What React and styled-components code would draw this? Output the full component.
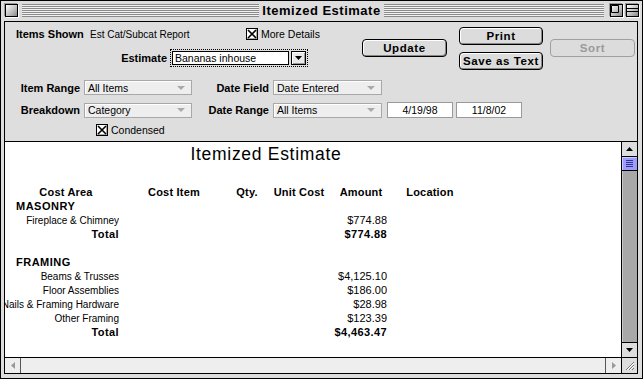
import React from 'react';
import styled, { createGlobalStyle } from 'styled-components';

const GlobalStyle = createGlobalStyle`
  body {
    margin: 0;
    background: #fff;
    font-family: "Liberation Sans", Arial, sans-serif;
  }
`;

const Window = styled.div`
  width: 643px;
  height: 379px;
  box-sizing: border-box;
  border: 1px solid #000;
  background: #dddddd;
  display: flex;
  flex-direction: column;
  overflow: hidden;
`;

const TitleBar = styled.div`
  height: 19px;
  display: grid;
  grid-template-columns: 1fr auto 1fr;
  align-items: center;
  padding: 0 3px;
`;

const TitleSide = styled.div`
  display: flex;
  align-items: center;
  gap: ${({ right }) => (right ? 3 : 4)}px;
`;

const BoxIcon = styled.div`
  width: 11px;
  height: 11px;
  border: 1px solid #000;
  background: linear-gradient(135deg, #fff 0%, #bbb 60%, #888 100%);
  box-shadow: 1px 1px 0 #fff, -1px -1px 0 #999;
  flex: none;
  position: relative;
  margin-left: ${({ ml }) => ml || 0}px;
  svg {
    position: absolute;
    inset: 0;
  }
`;

const Stripes = styled.div`
  flex: 1;
  height: 13px;
  background: repeating-linear-gradient(to bottom, #8a8a8a 0 1px, #f2f2f2 1px 2px);
`;

const WindowTitle = styled.div`
  font-weight: bold;
  font-size: 13px;
  padding: 0 3px;
  letter-spacing: 0.5px;
`;

const Frame = styled.div`
  flex: 1;
  display: flex;
  flex-direction: column;
  margin: 1px 4px 4px 3px;
  border: 1px solid #000;
  min-height: 0;
`;

const Panel = styled.div`
  height: 114px;
  padding-top: 5px;
  background: #dedede;
  border-bottom: 1px solid #000;
  flex: none;
  font-size: 10.5px;
`;

const TopSection = styled.div`
  display: flex;
  height: 44px;
`;

const LeftTop = styled.div`
  width: 357px;
  display: flex;
  flex-direction: column;
`;

const Row = styled.div`
  display: flex;
  align-items: center;
  height: ${({ h }) => h || 15}px;
  margin-top: ${({ mt }) => mt || 0}px;
  padding-left: ${({ pl }) => pl || 0}px;
`;

const Label = styled.div`
  font-weight: bold;
  font-size: 11px;
  width: ${({ w }) => (w ? `${w}px` : 'auto')};
  text-align: ${({ right }) => (right ? 'right' : 'left')};
  padding-right: ${({ right }) => (right ? 4 : 0)}px;
  box-sizing: border-box;
  flex: none;
  white-space: nowrap;
`;

const Value = styled.div`
  width: ${({ w }) => w}px;
  font-size: 10px;
  flex: none;
  white-space: nowrap;
`;

const CheckWrap = styled.div`
  display: flex;
  align-items: center;
  gap: 3px;
`;

const CheckBox = styled.div`
  width: 10px;
  height: 10px;
  border: 1px solid #000;
  background: #fff;
  box-shadow: inset -1px -1px 0 #aaa;
  display: flex;
  svg {
    display: block;
  }
`;

const EstimateCombo = styled.div`
  display: flex;
  align-items: center;
  gap: 2px;
  outline: 1px dotted #000;
  outline-offset: 0;
  padding: 1px;
`;

const Field = styled.div`
  width: ${({ w }) => w}px;
  height: ${({ h }) => h || 13}px;
  box-sizing: border-box;
  background: #fff;
  border: 1px solid ${({ light }) => (light ? '#9a9a9a' : '#000')};
  display: flex;
  align-items: center;
  justify-content: ${({ center }) => (center ? 'center' : 'flex-start')};
  padding-left: ${({ center }) => (center ? 0 : 2)}px;
  font-size: 10.5px;
  margin-left: ${({ ml }) => ml || 0}px;
`;

const ArrowButton = styled.div`
  width: 15px;
  height: 14px;
  box-sizing: border-box;
  border: 1px solid #000;
  background: #e8e8e8;
  box-shadow: inset 1px 1px 0 #fff, inset -1px -1px 0 #999;
  display: flex;
  align-items: center;
  justify-content: center;
`;

const ButtonArea = styled.div`
  display: flex;
  gap: 12px;
`;

const ButtonColumn = styled.div`
  display: flex;
  flex-direction: column;
  gap: 7px;
`;

const Button = styled.div`
  width: ${({ w }) => w || 85}px;
  height: 18px;
  margin-top: ${({ mt }) => mt || 0}px;
  margin-left: ${({ ml }) => ml || 0}px;
  box-sizing: border-box;
  border: 1px solid ${({ disabled }) => (disabled ? '#a0a0a0' : '#000')};
  border-radius: 4px;
  background: #dcdcdc;
  box-shadow: ${({ disabled }) =>
    disabled ? 'none' : 'inset 1px 1px 0 #fff, inset -1px -1px 0 #888'};
  color: ${({ disabled }) => (disabled ? '#9a9a9a' : '#000')};
  font-weight: bold;
  font-size: 11.5px;
  letter-spacing: 0.6px;
  display: flex;
  align-items: center;
  justify-content: center;
`;

const Popup = styled.div`
  width: ${({ w }) => w}px;
  height: 15px;
  box-sizing: border-box;
  border: 1px solid #a8a8a8;
  background: #eeeeee;
  box-shadow: inset 1px 1px 0 #fff;
  display: flex;
  align-items: center;
  justify-content: space-between;
  padding: 0 6px 0 3px;
  font-size: 10.5px;
  flex: none;
`;

const GrayTriangle = styled.div`
  width: 0;
  height: 0;
  border-left: 4px solid transparent;
  border-right: 4px solid transparent;
  border-top: 4px solid #aaa;
`;

const DocArea = styled.div`
  flex: 1;
  display: flex;
  min-height: 0;
`;

const Doc = styled.div`
  flex: 1;
  background: #fff;
  overflow: hidden;
  font-size: 10px;
`;

const DocTitle = styled.div`
  width: 522px;
  text-align: center;
  font-size: 17.5px;
  letter-spacing: 0.7px;
  line-height: 20px;
  margin-top: 2px;
`;

const Table = styled.div`
  margin-top: 21px;
  display: grid;
  grid-template-columns: 114px 110px 36px 68px 54px 78px;
  grid-auto-rows: 14px;
  align-items: center;
`;

const Head = styled.div`
  font-weight: bold;
  font-size: 11px;
  text-align: center;
  white-space: nowrap;
  letter-spacing: 0.2px;
  padding-left: ${({ pl }) => pl || 0}px;
`;

const Section = styled.div`
  grid-column: 1 / -1;
  padding-left: 11px;
  font-weight: bold;
  font-size: 11px;
  letter-spacing: 0.5px;
`;

const Cell = styled.div`
  display: flex;
  justify-content: flex-end;
  overflow: hidden;
  white-space: nowrap;
  font-weight: ${({ bold }) => (bold ? 'bold' : 'normal')};
  font-size: ${({ bold, money }) => (bold || money ? 11 : 10)}px;
  grid-column: ${({ col }) => col};
  letter-spacing: ${({ bold }) => (bold ? 0.4 : 0)}px;
  span {
    flex: none;
  }
`;

const VScroll = styled.div`
  width: 15px;
  border-left: 1px solid #000;
  display: flex;
  flex-direction: column;
  background: #a8a8a8;
  box-shadow: inset 1px 0 0 #c8c8c8;
`;

const ScrollArrow = styled.div`
  height: 14px;
  flex: none;
  background: #dddddd;
  border-top: ${({ bottom }) => (bottom ? '1px solid #000' : 'none')};
  border-bottom: ${({ bottom }) => (bottom ? 'none' : '1px solid #000')};
  display: flex;
  align-items: center;
  justify-content: center;
`;

const Thumb = styled.div`
  height: 14px;
  flex: none;
  box-sizing: border-box;
  background: #9c9cff;
  border-bottom: 1px solid #000;
  box-shadow: inset 1px 1px 0 #ccccff;
  display: flex;
  flex-direction: column;
  align-items: center;
  justify-content: center;
  gap: 1px;
  i {
    width: 7px;
    height: 1px;
    background: #33338a;
  }
`;

const Track = styled.div`
  flex: 1;
`;

const BottomBar = styled.div`
  height: 15px;
  border-top: 1px solid #000;
  display: flex;
  flex: none;
`;

const HScroll = styled.div`
  flex: 1;
  display: flex;
  background: #eeeeee;
  justify-content: space-between;
`;

const HArrow = styled.div`
  width: 15px;
  border-${({ side }) => side}: 1px solid #555;
  display: flex;
  align-items: center;
  justify-content: center;
`;

const SizeBox = styled.div`
  width: 15px;
  border-left: 1px solid #000;
  background: #dddddd;
  display: flex;
  align-items: center;
  justify-content: center;
`;

const XMark = () => (
  <svg width="10" height="10" viewBox="0 0 10 10">
    <path d="M1 1L9 9M9 1L1 9" stroke="#000" strokeWidth="1.6" />
  </svg>
);

const Check = ({ children }) => (
  <CheckWrap>
    <CheckBox>
      <XMark />
    </CheckBox>
    <span>{children}</span>
  </CheckWrap>
);

const SelectMenu = ({ w, children }) => (
  <Popup w={w}>
    <span>{children}</span>
    <GrayTriangle />
  </Popup>
);

const rows = [
  { type: 'section', label: 'MASONRY' },
  { name: 'Fireplace & Chimney', amount: '$774.88' },
  { name: 'Total', amount: '$774.88', bold: true },
  { type: 'blank' },
  { type: 'section', label: 'FRAMING' },
  { name: 'Beams & Trusses', amount: '$4,125.10' },
  { name: 'Floor Assemblies', amount: '$186.00' },
  { name: 'Nails & Framing Hardware', amount: '$28.98' },
  { name: 'Other Framing', amount: '$123.39' },
  { name: 'Total', amount: '$4,463.47', bold: true },
];

export default function App() {
  return (
    <>
      <GlobalStyle />
      <Window>
        <TitleBar>
          <TitleSide>
            <BoxIcon ml={1} />
            <Stripes />
          </TitleSide>
          <WindowTitle>Itemized Estimate</WindowTitle>
          <TitleSide right>
            <Stripes />
            <BoxIcon ml={3}>
              <svg width="11" height="11" viewBox="0 0 11 11">
                <path d="M0.5 0.5H7.5V7.5H0.5Z" fill="none" stroke="#000" />
              </svg>
            </BoxIcon>
            <BoxIcon>
              <svg width="11" height="11" viewBox="0 0 11 11">
                <path d="M0 3.5H11M0 6.5H11" stroke="#000" />
              </svg>
            </BoxIcon>
          </TitleSide>
        </TitleBar>
        <Frame>
          <Panel>
            <TopSection>
              <LeftTop>
                <Row h={12} mt={1} pl={11}>
                  <Label w={74}>Items Shown</Label>
                  <Value w={156}>Est Cat/Subcat Report</Value>
                  <Check>More Details</Check>
                </Row>
                <Row h={16} mt={10}>
                  <Label w={166} right>
                    Estimate
                  </Label>
                  <EstimateCombo>
                    <Field w={117} h={14}>
                      Bananas inhouse
                    </Field>
                    <ArrowButton>
                      <svg width="7" height="4" viewBox="0 0 7 4">
                        <path d="M0 0H7L3.5 4Z" fill="#000" />
                      </svg>
                    </ArrowButton>
                  </EstimateCombo>
                </Row>
              </LeftTop>
              <ButtonArea>
                <Button mt={12}>Update</Button>
                <ButtonColumn>
                  <Button w={84}>Print</Button>
                  <Button w={84}>Save as Text</Button>
                </ButtonColumn>
                <Button mt={12} ml={-5} disabled>
                  Sort
                </Button>
              </ButtonArea>
            </TopSection>
            <Row h={15} mt={9}>
              <Label w={79} right>
                Item Range
              </Label>
              <SelectMenu w={108}>All Items</SelectMenu>
              <Label w={81} right>
                Date Field
              </Label>
              <SelectMenu w={109}>Date Entered</SelectMenu>
            </Row>
            <Row h={16} mt={7}>
              <Label w={79} right>
                Breakdown
              </Label>
              <SelectMenu w={108}>Category</SelectMenu>
              <Label w={81} right>
                Date Range
              </Label>
              <SelectMenu w={109}>All Items</SelectMenu>
              <Field w={66} h={16} light center ml={5}>
                4/19/98
              </Field>
              <Field w={66} h={16} light center ml={3}>
                11/8/02
              </Field>
            </Row>
            <Row h={12} mt={6} pl={91}>
              <Check>Condensed</Check>
            </Row>
          </Panel>
          <DocArea>
            <Doc>
              <DocTitle>Itemized Estimate</DocTitle>
              <Table>
                <Head pl={8}>Cost Area</Head>
                <Head>Cost Item</Head>
                <Head>Qty.</Head>
                <Head>Unit Cost</Head>
                <Head pl={2}>Amount</Head>
                <Head pl={8}>Location</Head>
                {rows.map((r, i) => {
                  if (r.type === 'section') return <Section key={i}>{r.label}</Section>;
                  if (r.type === 'blank') return <Section key={i} />;
                  return (
                    <React.Fragment key={i}>
                      <Cell col="1" bold={r.bold}>
                        <span>{r.name}</span>
                      </Cell>
                      <Cell col="5" bold={r.bold} money>
                        <span>{r.amount}</span>
                      </Cell>
                    </React.Fragment>
                  );
                })}
              </Table>
            </Doc>
            <VScroll>
              <ScrollArrow>
                <svg width="7" height="4" viewBox="0 0 7 4">
                  <path d="M3.5 0L7 4H0Z" fill="#000" />
                </svg>
              </ScrollArrow>
              <Thumb>
                <i />
                <i />
                <i />
                <i />
              </Thumb>
              <Track />
              <ScrollArrow bottom>
                <svg width="7" height="4" viewBox="0 0 7 4">
                  <path d="M0 0H7L3.5 4Z" fill="#000" />
                </svg>
              </ScrollArrow>
            </VScroll>
          </DocArea>
          <BottomBar>
            <HScroll>
              <HArrow side="right">
                <svg width="4" height="7" viewBox="0 0 4 7">
                  <path d="M4 0V7L0 3.5Z" fill="#999" />
                </svg>
              </HArrow>
              <HArrow side="left">
                <svg width="4" height="7" viewBox="0 0 4 7">
                  <path d="M0 0V7L4 3.5Z" fill="#999" />
                </svg>
              </HArrow>
            </HScroll>
            <SizeBox>
              <svg width="11" height="11" viewBox="0 0 11 11">
                <path d="M2 10L10 2M5 10L10 5M8 10L10 8" stroke="#777" strokeWidth="1" />
                <path d="M3 10L10 3M6 10L10 6" stroke="#fff" strokeWidth="1" />
              </svg>
            </SizeBox>
          </BottomBar>
        </Frame>
      </Window>
    </>
  );
}
